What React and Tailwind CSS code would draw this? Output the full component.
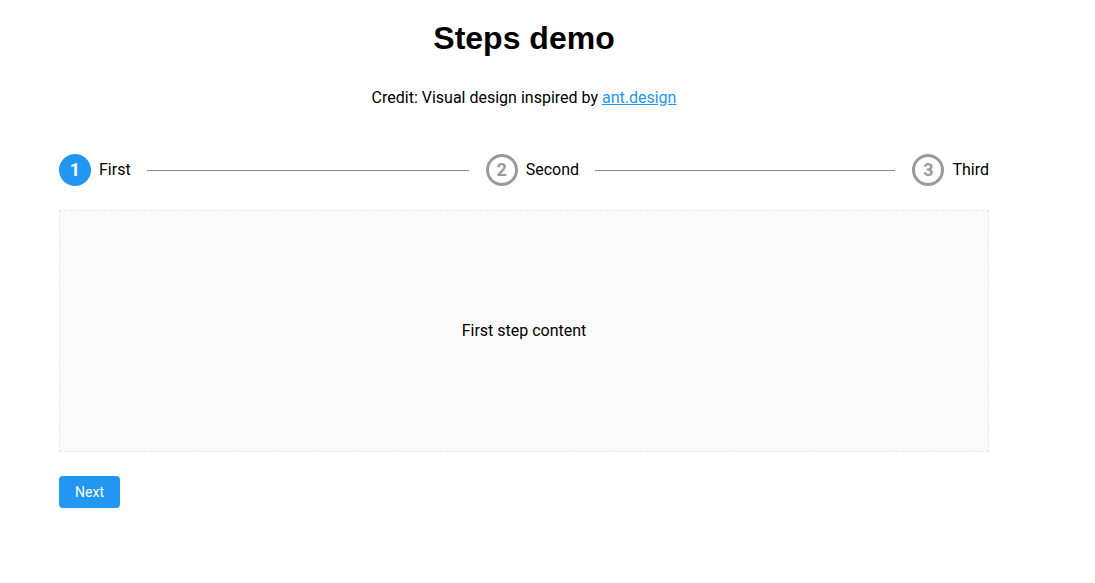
import React, { useState } from "react";

// Steps demo: simple three-step wizard in the ant.design style

const STEPS = [
  { title: "First", content: "First step content" },
  { title: "Second", content: "Second step content" },
  { title: "Third", content: "Last step content" },
];

function StepIcon({ index, active }) {
  if (active) {
    return (
      <div className="flex h-8 w-8 shrink-0 items-center justify-center rounded-full bg-[#2196f3] text-lg font-bold text-white">
        {index + 1}
      </div>
    );
  }
  return (
    <div className="flex h-8 w-8 shrink-0 items-center justify-center rounded-full border-[3px] border-[#999] text-lg font-bold text-[#999]">
      {index + 1}
    </div>
  );
}

export default function App() {
  const [current, setCurrent] = useState(0);

  return (
    <div className="min-h-screen bg-white font-['Roboto','Liberation_Sans',sans-serif] text-black">
      <div className="ml-[59px] w-[930px]">
        <h1 className="pt-[18px] text-center font-['Liberation_Sans',sans-serif] text-[32px] font-bold leading-[40px]">
          Steps demo
        </h1>
        <p className="mt-[28px] text-center text-base leading-6">
          Credit: Visual design inspired by{" "}
          <a href="#" className="text-[#2196f3] underline">
            ant.design
          </a>
        </p>

        {/* step bar */}
        <div className="mt-[44px] flex items-center">
          {STEPS.map((s, i) => {
            const last = i === STEPS.length - 1;
            return (
              <div key={s.title} className={last ? "flex shrink-0 items-center" : "flex flex-1 items-center"}>
                <StepIcon index={i} active={i === current} />
                <span className="ml-2 text-base">{s.title}</span>
                {!last && <div className="ml-4 mr-[17px] h-px flex-1 bg-[#888]" />}
              </div>
            );
          })}
        </div>

        <div className="mt-6 flex h-[242px] items-center justify-center border border-dashed border-[#e9e9e9] bg-[#fafafa] text-base">
          {STEPS[current].content}
        </div>

        <div className="mt-6">
          <button
            onClick={() => setCurrent((c) => Math.min(c + 1, STEPS.length - 1))}
            className="h-8 w-[61px] rounded-sm bg-[#2196f3] text-sm text-white shadow-[0_2px_0_rgba(0,0,0,0.04)]"
          >
            Next
          </button>
        </div>
      </div>
    </div>
  );
}
